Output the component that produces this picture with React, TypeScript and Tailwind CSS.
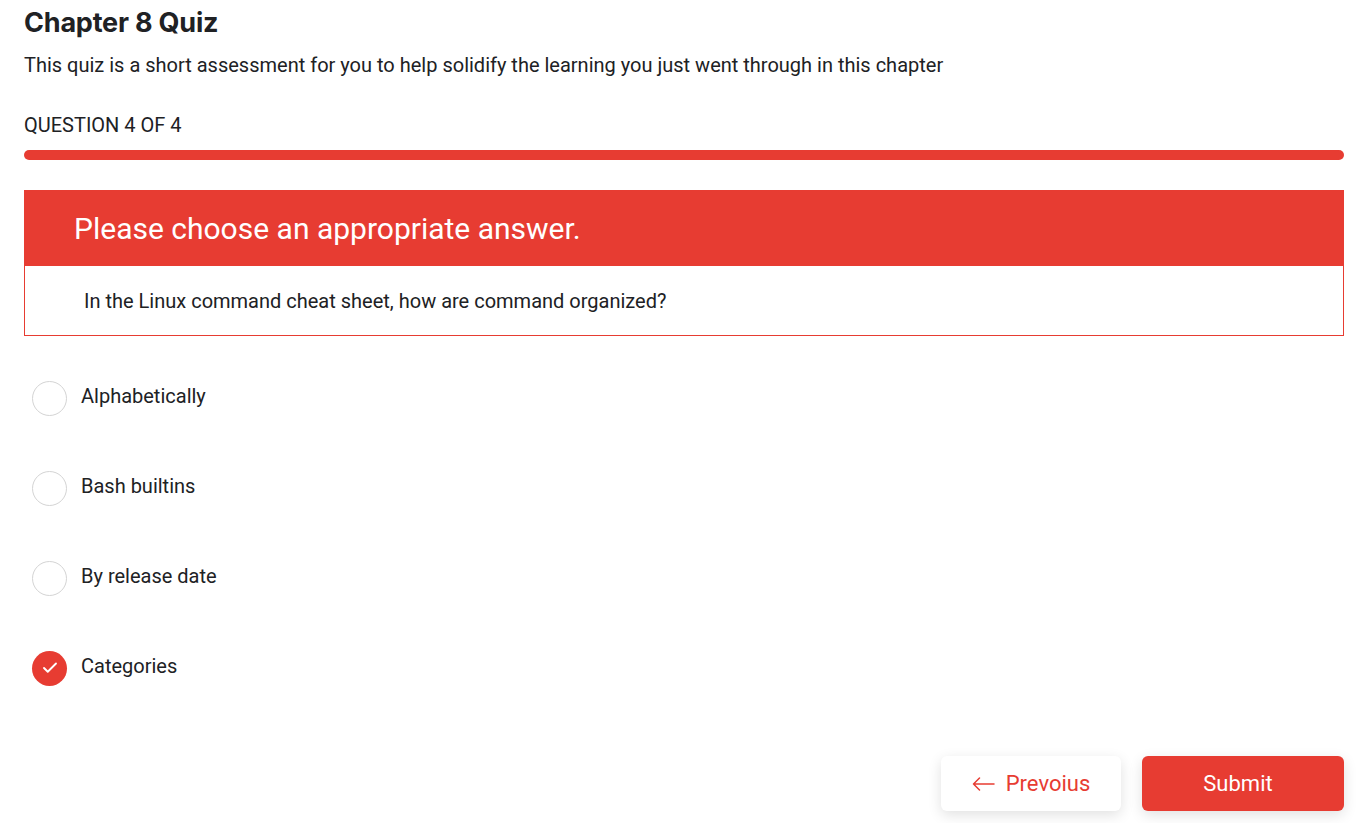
import { Check } from "lucide-react";

const options = ["Alphabetically", "Bash builtins", "By release date", "Categories"];
const selected = 3;

export default function App() {
  return (
    <div className="min-h-screen bg-white text-[#202124] font-['Roboto',sans-serif]">
      <div className="ml-6 w-[1320px] pt-[6px]">
        <h1 className="text-[27px] font-bold leading-[34px] font-['Inter',sans-serif] tracking-[-0.2px]">Chapter 8 Quiz</h1>
        <p className="mt-[13px] text-[20px] leading-[24px]">
          This quiz is a short assessment for you to help solidify the learning you just went through in this chapter
        </p>
        <div className="mt-[36px] text-[20px] leading-[24px]">QUESTION 4 OF 4</div>
        <div className="mt-[13px] h-[10px] w-full rounded-full bg-[#e73c32]" />

        <div className="mt-[30px] border border-[#e73c32]">
          <div className="h-[75px] bg-[#e73c32] pl-[49px] flex items-center text-white text-[30px]">
            Please choose an appropriate answer.
          </div>
          <div className="h-[69px] pl-[59px] flex items-center text-[20px]">
            In the Linux command cheat sheet, how are command organized?
          </div>
        </div>

        <div className="mt-[45px] flex flex-col gap-[56px] pl-2">
          {options.map((o, i) => (
            <label key={o} className="flex items-center gap-[14px] h-[34px]">
              {i === selected ? (
                <span className="size-[35px] rounded-full bg-[#e73c32] flex items-center justify-center">
                  <Check className="size-[18px] text-white" strokeWidth={2.5} />
                </span>
              ) : (
                <span className="size-[35px] rounded-full border border-[#d4d4d4] bg-white" />
              )}
              <span className="text-[20px] -mt-[4px]">{o}</span>
            </label>
          ))}
        </div>

        <div className="mt-[71px] flex justify-end gap-[21px]">
          <button className="w-[180px] h-[55px] rounded-md bg-white shadow-[0_4px_14px_rgba(0,0,0,0.12)] flex items-center justify-center gap-[11px] text-[#e73c32] text-[22px]">
            <svg width="23" height="14" viewBox="0 0 23 14" fill="none" stroke="currentColor" strokeWidth="1.5" strokeLinecap="round" strokeLinejoin="round">
              <path d="M22 7H1.5M7.5 1L1.5 7l6 6" />
            </svg>
            Prevoius
          </button>
          <button className="w-[202px] h-[55px] rounded-md bg-[#e73c32] shadow-[0_4px_14px_rgba(0,0,0,0.12)] text-white text-[22px] pr-[10px]">
            Submit
          </button>
        </div>
      </div>
    </div>
  );
}
